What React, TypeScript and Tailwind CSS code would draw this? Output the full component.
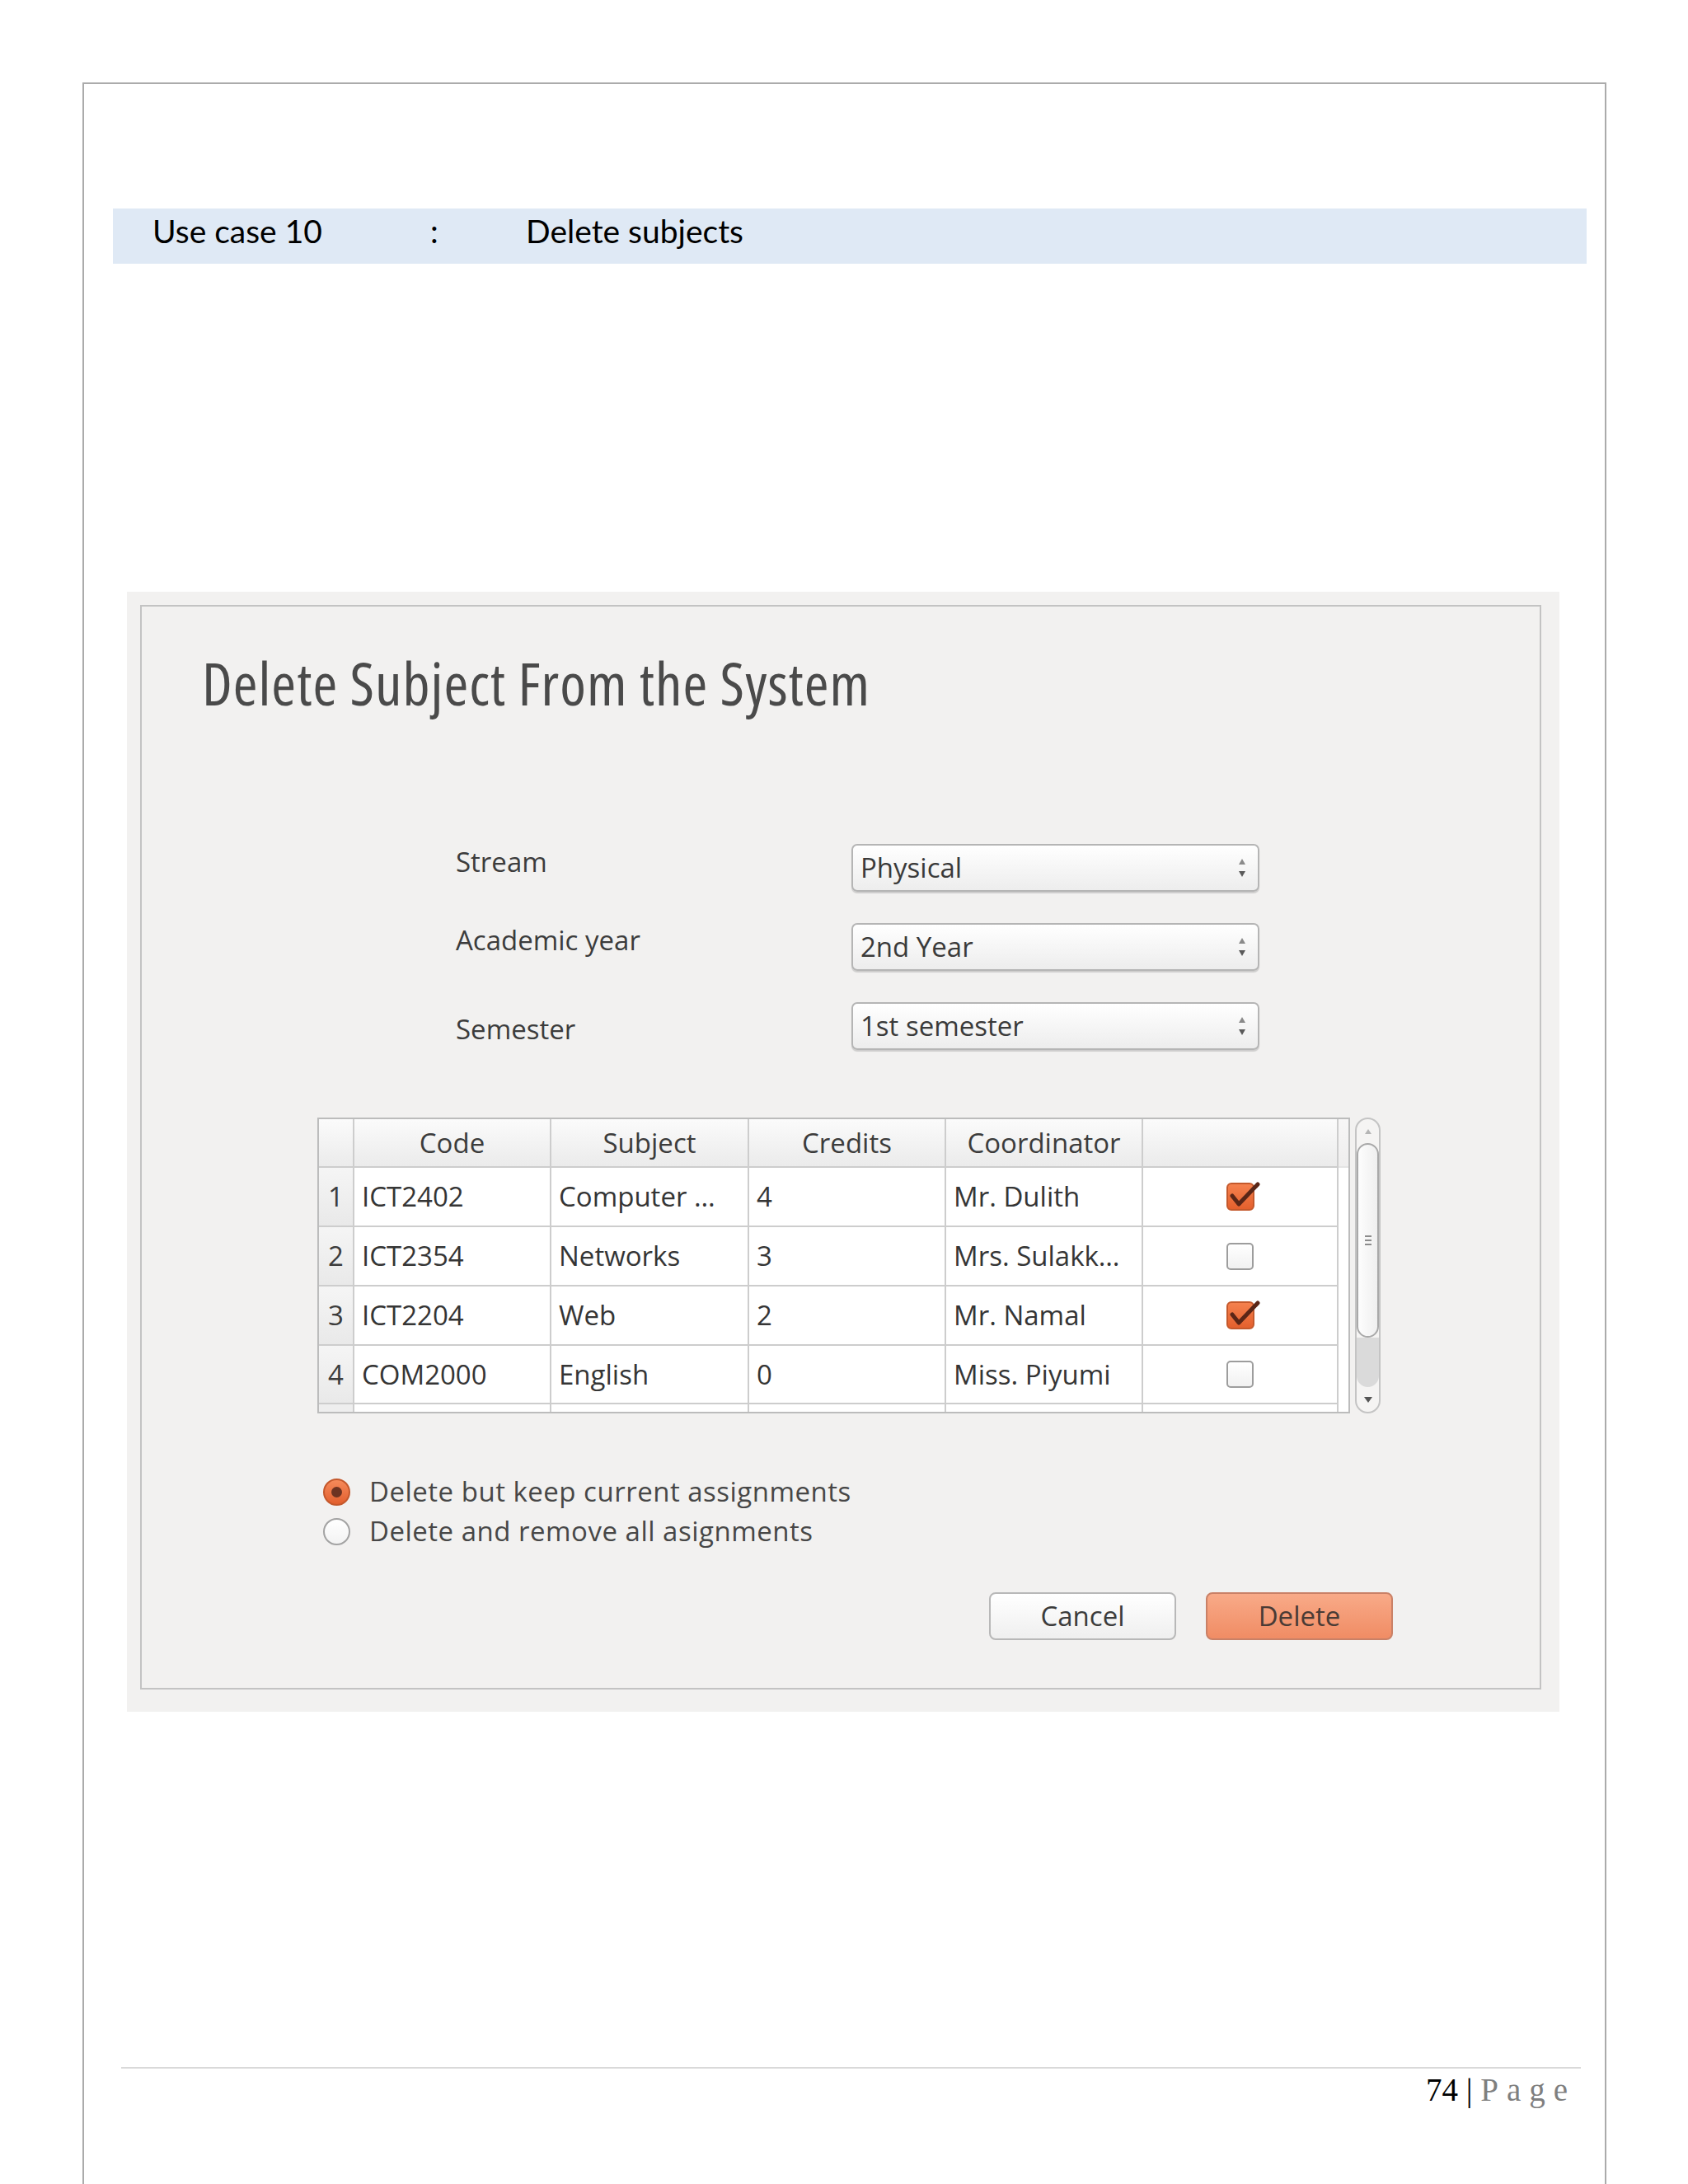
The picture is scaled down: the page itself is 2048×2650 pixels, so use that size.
import React from "react";

const body = "font-['Open_Sans','Noto_Sans',sans-serif]";

function Arrows() {
  return (
    <svg width="12" height="28" viewBox="0 0 12 28">
      <path d="M6 3 L10 10 L2 10 Z" fill="#8a8a8a" />
      <path d="M2 18 L10 18 L6 25 Z" fill="#5a5a5a" />
    </svg>
  );
}

function Combo({ value }: { value: string }) {
  return (
    <div className="w-[495px] h-[58px] rounded-[7px] border-2 border-[#b5b5b5] bg-linear-to-b from-white to-[#ededed] shadow-[0_2px_1px_rgba(0,0,0,0.15)] flex items-center pl-[9px] pr-[13px]">
      <span className="flex-1 text-[33px] leading-[40px] text-[#3a3a3a]">{value}</span>
      <Arrows />
    </div>
  );
}

function CheckBox({ checked }: { checked: boolean }) {
  if (!checked) {
    return (
      <div className="w-[33px] h-[33px] rounded-[5px] border-2 border-[#9d9d9d] bg-linear-to-b from-white to-[#f1f1f1]" />
    );
  }
  return (
    <svg width="42" height="36" viewBox="0 0 42 36" className="overflow-visible ml-[8px]">
      <defs>
        <linearGradient id="cbg" x1="0" y1="0" x2="0" y2="1">
          <stop offset="0" stopColor="#f5824f" />
          <stop offset="1" stopColor="#e35f2c" />
        </linearGradient>
      </defs>
      <rect x="1" y="2" width="32" height="32" rx="5" fill="url(#cbg)" stroke="#c4592c" strokeWidth="2" />
      <path d="M7 17 L15 27 L38 3" fill="none" stroke="#5a2617" strokeWidth="5" strokeLinecap="round" strokeLinejoin="round" />
    </svg>
  );
}

const rows = [
  { n: "1", code: "ICT2402", subject: "Computer …", credits: "4", coord: "Mr. Dulith", checked: true, h: "h-[72px]" },
  { n: "2", code: "ICT2354", subject: "Networks", credits: "3", coord: "Mrs. Sulakk…", checked: false, h: "h-[72px]" },
  { n: "3", code: "ICT2204", subject: "Web", credits: "2", coord: "Mr. Namal", checked: true, h: "h-[72px]" },
  { n: "4", code: "COM2000", subject: "English", credits: "0", coord: "Miss. Piyumi", checked: false, h: "h-[71px]" },
];

const line = "border-[#cdcdcd]";

function Table() {
  const cell = `border-r-2 border-b-2 ${line} bg-white flex items-center pl-[9px] text-[33px] leading-[40px] text-[#353535] whitespace-nowrap overflow-hidden`;
  const head = `border-r-2 border-b-2 ${line} bg-linear-to-b from-[#fbfbfb] to-[#ebebeb] flex items-center justify-center text-[33px] leading-[40px] text-[#3c3c3c]`;
  return (
    <div className="w-[1253px] h-[359px] border-2 border-[#bcbcbc] bg-white overflow-hidden flex flex-col">
      <div className="flex h-[59px] shrink-0">
        <div className={`w-[43px] ${head}`} />
        <div className={`w-[239px] ${head}`}>Code</div>
        <div className={`w-[240px] ${head}`}>Subject</div>
        <div className={`w-[239px] ${head}`}>Credits</div>
        <div className={`w-[239px] ${head}`}>Coordinator</div>
        <div className={`w-[237px] ${head}`} />
        <div className="flex-1 bg-linear-to-b from-[#f7f6f6] to-[#efeeee] border-b-2 border-[#e4e4e4]" />
      </div>
      {rows.map((r) => (
        <div key={r.n} className={`flex ${r.h} shrink-0`}>
          <div className={`w-[43px] border-r-2 border-b-2 ${line} bg-linear-to-b from-[#f5f5f5] to-[#e9e9e9] flex items-center justify-center text-[33px] leading-[40px] text-[#3c3c3c]`}>
            {r.n}
          </div>
          <div className={`w-[239px] ${cell}`}>{r.code}</div>
          <div className={`w-[240px] ${cell}`}>{r.subject}</div>
          <div className={`w-[239px] ${cell}`}>{r.credits}</div>
          <div className={`w-[239px] ${cell}`}>{r.coord}</div>
          <div className={`w-[237px] border-r-2 border-b-2 ${line} bg-white flex items-center justify-center`}>
            <CheckBox checked={r.checked} />
          </div>
          <div className="flex-1 bg-white" />
        </div>
      ))}
      <div className="flex flex-1">
        <div className={`w-[43px] border-r-2 ${line} bg-[#eeeeee]`} />
        <div className={`w-[239px] border-r-2 ${line}`} />
        <div className={`w-[240px] border-r-2 ${line}`} />
        <div className={`w-[239px] border-r-2 ${line}`} />
        <div className={`w-[239px] border-r-2 ${line}`} />
        <div className={`w-[237px] border-r-2 ${line}`} />
        <div className="flex-1" />
      </div>
    </div>
  );
}

function ScrollBar() {
  return (
    <div className="w-[31px] h-[359px] rounded-full border-2 border-[#c4c4c4] bg-[#f5f4f3] flex flex-col overflow-hidden">
      <div className="h-[29px] shrink-0 flex items-center justify-center">
        <svg width="8" height="6" viewBox="0 0 8 6"><path d="M4 0 L8 6 L0 6 Z" fill="#b5b5b5" /></svg>
      </div>
      <div className="h-[236px] shrink-0 rounded-full border-2 border-[#a9a9a9] bg-linear-to-r from-[#fdfdfd] to-[#efefef] flex flex-col items-center justify-center gap-[3px]">
        <div className="w-[8px] h-[2px] bg-[#8c8c8c]" />
        <div className="w-[8px] h-[2px] bg-[#8c8c8c]" />
        <div className="w-[8px] h-[2px] bg-[#8c8c8c]" />
      </div>
      <div className="h-[60px] shrink-0 bg-[#dadada] rounded-b-full" />
      <div className="flex-1 flex items-center justify-center">
        <svg width="10" height="7" viewBox="0 0 10 7"><path d="M0 0 L10 0 L5 7 Z" fill="#555" /></svg>
      </div>
    </div>
  );
}

function Radio({ checked, label }: { checked: boolean; label: string }) {
  return (
    <div className="flex items-center h-[40px]">
      {checked ? (
        <div className="w-[33px] h-[33px] rounded-full border-2 border-[#c4582c] bg-linear-to-b from-[#f58a5a] to-[#e25f2d] flex items-center justify-center">
          <div className="w-[13px] h-[13px] rounded-full bg-[#6d3321]" />
        </div>
      ) : (
        <div className="w-[33px] h-[33px] rounded-full border-2 border-[#a3a3a3] bg-linear-to-b from-white to-[#f3f3f3]" />
      )}
      <span className="ml-[23px] text-[33px] leading-[40px] tracking-[0.5px] text-[#474747]">{label}</span>
    </div>
  );
}

export default function App() {
  return (
    <div className={`w-[2048px] h-[2650px] bg-white overflow-hidden ${body}`}>
      <div className="ml-[100px] pt-[100px]">
        <div className="w-[1849px] h-[2550px] border-l-2 border-r-2 border-t-2 border-[#ababab] flex flex-col">
          {/* Use case band */}
          <div className="mt-[151px] ml-[35px] w-[1788px] h-[67px] bg-[#dfe9f5] flex items-start pt-[5px] pl-[48px] font-['Lato',sans-serif] text-[39px] leading-[44px] text-black">
            <span className="w-[337px]">Use case 10</span>
            <span className="w-[116px]">:</span>
            <span>Delete subjects</span>
          </div>

          {/* Dialog */}
          <div className="mt-[398px] ml-[52px] w-[1738px] h-[1359px] bg-[#f2f1f0] pt-[16px] pl-[16px]">
            <div className="w-[1700px] h-[1316px] border-2 border-[#c3c3c3] bg-[#f2f1f0] flex flex-col">
              <h1 className="mt-[52px] mb-[5px] pl-[73px] h-[80px] font-['Open_Sans',sans-serif] font-stretch-[75%] tracking-[1px] text-[72px] leading-[80px] text-[#4a4a4a]">
                Delete Subject From the System
              </h1>

              <div className="mt-[151px] ml-[381px] flex flex-col gap-[38px]">
                <div className="flex h-[58px]">
                  <div className="w-[480px] pt-[2px] text-[33px] leading-[40px] text-[#3c3c3c]">Stream</div>
                  <Combo value="Physical" />
                </div>
                <div className="flex h-[58px]">
                  <div className="w-[480px] pt-[1px] text-[33px] leading-[40px] text-[#3c3c3c]">Academic year</div>
                  <Combo value="2nd Year" />
                </div>
                <div className="flex h-[58px]">
                  <div className="w-[480px] pt-[13px] text-[33px] leading-[40px] text-[#3c3c3c]">Semester</div>
                  <Combo value="1st semester" />
                </div>
              </div>

              <div className="mt-[82px] ml-[213px] flex gap-[6px]">
                <Table />
                <ScrollBar />
              </div>

              <div className="mt-[75px] ml-[220px] flex flex-col gap-[8px]">
                <Radio checked label="Delete but keep current assignments" />
                <Radio checked={false} label="Delete and remove all asignments" />
              </div>

              <div className="mt-[54px] flex justify-end pr-[178px] gap-[36px]">
                <button className="w-[227px] h-[58px] rounded-[8px] border-2 border-[#b8b8b8] bg-linear-to-b from-white to-[#efefef] text-[33px] leading-[40px] text-[#3c3c3c]">
                  Cancel
                </button>
                <button className="w-[227px] h-[58px] rounded-[8px] border-2 border-[#c98167] bg-linear-to-b from-[#f8aa88] to-[#f08c64] text-[33px] leading-[40px] text-[#4a3b35]">
                  Delete
                </button>
              </div>
            </div>
          </div>

          {/* Footer */}
          <div className="mt-[431px] ml-[45px] w-[1771px] h-[2px] bg-[#d9d9d9]" />
          <div className="mt-[3px] w-[1800px] text-right font-['Liberation_Serif',serif] text-[39px] leading-[46px]">
            <span className="text-black">74 | </span>
            <span className="text-[#7f7f7f] tracking-[10px] mr-[-10px]">Page</span>
          </div>
        </div>
      </div>
    </div>
  );
}
